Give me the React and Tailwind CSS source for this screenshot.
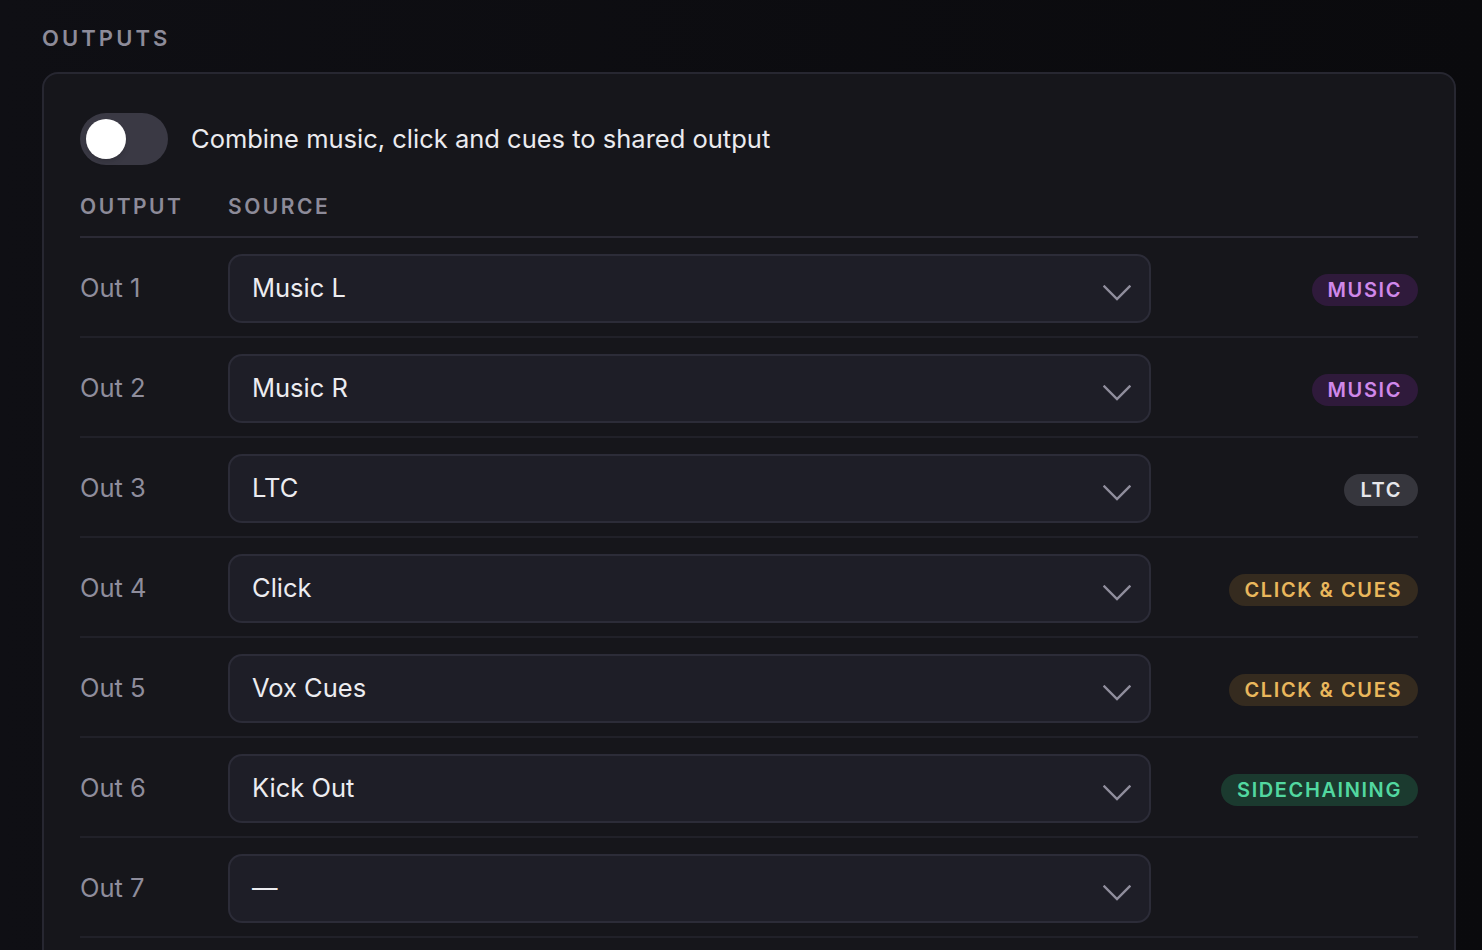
import React, { useState } from 'react';

const rows = [
  { out: 'Out 1', source: 'Music L', tag: 'music' },
  { out: 'Out 2', source: 'Music R', tag: 'music' },
  { out: 'Out 3', source: 'LTC', tag: 'ltc' },
  { out: 'Out 4', source: 'Click', tag: 'click' },
  { out: 'Out 5', source: 'Vox Cues', tag: 'click' },
  { out: 'Out 6', source: 'Kick Out', tag: 'side' },
  { out: 'Out 7', source: '—', tag: null },
];

const tags = {
  music: { label: 'MUSIC', cls: 'bg-[#2f1a3b] text-[#d088ea]' },
  ltc: { label: 'LTC', cls: 'bg-[#36363d] text-[#e6e6ea]' },
  click: { label: 'CLICK & CUES', cls: 'bg-[#352b1f] text-[#e9b75c]' },
  side: { label: 'SIDECHAINING', cls: 'bg-[#1b3a2f] text-[#52d8a0]' },
};

const Chevron = () => (
  <svg width="28" height="16" viewBox="0 0 28 16" fill="none" className="shrink-0 mt-[10px]">
    <path d="M1.5 1.5 L14 14 L26.5 1.5" stroke="#8f8d9c" strokeWidth="2.4" strokeLinecap="square" />
  </svg>
);

const Tag = ({ tag }) => {
  if (!tag) return null;
  const t = tags[tag];
  return (
    <span className={`mt-[3px] h-[32px] px-[16px] rounded-full flex items-center text-[20px] font-semibold tracking-[0.08em] ${t.cls}`}>
      {t.label}
    </span>
  );
};

export default function App() {
  const [combined, setCombined] = useState(false);

  return (
    <div
      className="min-h-[950px] w-full bg-gradient-to-r from-[#0f0f14] to-[#0a0a0d] pl-[42px] pr-[26px] pt-[24px] overflow-hidden"
      style={{ fontFamily: 'Inter, "Noto Sans", sans-serif' }}
    >
      <h2 className="text-[22px] leading-[28px] font-semibold tracking-[0.14em] text-[#8d8b99]">OUTPUTS</h2>

      <div className="mt-[20px] rounded-[16px] border-2 border-[#272731] bg-[#16161b] px-[36px] pt-[39px] pb-[40px]">
        {/* toggle */}
        <div className="flex items-center gap-[23px]">
          <button
            onClick={() => setCombined(!combined)}
            className="w-[88px] h-[52px] rounded-full bg-[#3a3944] flex items-center px-[6px]"
          >
            <span className={`w-[40px] h-[40px] rounded-full bg-white shadow-md ${combined ? 'ml-auto' : ''}`} />
          </button>
          <span className="text-[25.5px] text-[#ebebef]">Combine music, click and cues to shared output</span>
        </div>

        {/* header */}
        <div className="flex pt-[28px] pb-[15px] border-b-2 border-[#2b2a35] text-[21px] leading-[28px] font-semibold tracking-[0.12em] text-[#8d8b99]">
          <div className="w-[148px]">OUTPUT</div>
          <div>SOURCE</div>
        </div>

        {rows.map((r) => (
          <div key={r.out} className="flex items-center h-[100px] pt-[2px] border-b-2 border-[#212129]">
            <div className="w-[148px] text-[25.5px] text-[#8f8d9c]">{r.out}</div>
            <div className="w-[923px] h-[69px] rounded-[14px] border-2 border-[#2c2c38] bg-[#1e1e27] flex items-center justify-between pl-[22px] pr-[18px]">
              <span className="text-[25.5px] text-[#ececf0]">{r.source}</span>
              <Chevron />
            </div>
            <div className="flex-1 flex justify-end">
              <Tag tag={r.tag} />
            </div>
          </div>
        ))}
      </div>
    </div>
  );
}
